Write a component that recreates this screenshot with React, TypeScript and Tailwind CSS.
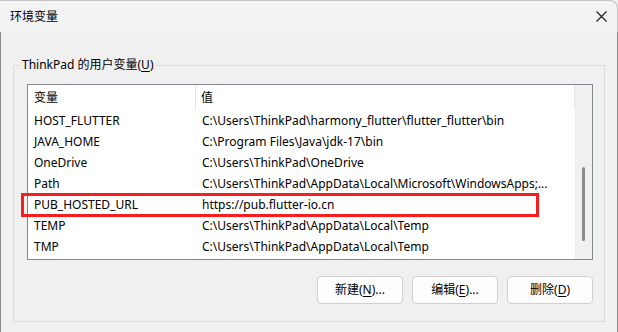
import React from "react";

const rows = [
  { name: "HOST_FLUTTER", value: "C:\\Users\\ThinkPad\\harmony_flutter\\flutter_flutter\\bin" },
  { name: "JAVA_HOME", value: "C:\\Program Files\\Java\\jdk-17\\bin" },
  { name: "OneDrive", value: "C:\\Users\\ThinkPad\\OneDrive" },
  { name: "Path", value: "C:\\Users\\ThinkPad\\AppData\\Local\\Microsoft\\WindowsApps;..." },
  { name: "PUB_HOSTED_URL", value: "https://pub.flutter-io.cn" },
  { name: "TEMP", value: "C:\\Users\\ThinkPad\\AppData\\Local\\Temp" },
  { name: "TMP", value: "C:\\Users\\ThinkPad\\AppData\\Local\\Temp" },
];

const font = "font-['Noto_Sans','Noto_Sans_CJK_SC',sans-serif]";

function DialogButton({ label, hotkey, tail }: { label: string; hotkey: string; tail: string }) {
  return (
    <button className="w-[86px] h-[28px] rounded-[4px] border border-[#d0d0d0] bg-[#fdfdfd] text-[12px] text-black flex items-center justify-center">
      {label}(<span className="underline underline-offset-2">{hotkey}</span>){tail}
    </button>
  );
}

export default function App() {
  return (
    <div className={`relative w-[618px] h-[332px] bg-[#f0f0f0] overflow-hidden flex flex-col text-black ${font}`}>
      {/* Title bar */}
      <div className="h-[32px] shrink-0 flex items-center justify-between pl-[10px] pr-[10px] bg-[#f3f3f3] border-r border-t border-[#c4c4c4] rounded-tr-[8px]">
        <span className="text-[12px]">环境变量</span>
        <svg width="11" height="11" viewBox="0 0 11 11" className="mb-[1px]">
          <path d="M0.5 0.5 L10.5 10.5 M10.5 0.5 L0.5 10.5" stroke="#1a1a1a" strokeWidth="1.1" fill="none" />
        </svg>
      </div>

      {/* Body */}
      <div className="flex-1 border-l border-r border-[#8a8a8a] pl-[12px] pr-[12px] pt-[33px]">
        {/* Group box */}
        <div className="relative w-[592px] h-[257px] border border-[#dcdcdc] flex flex-col">
          <span className="absolute -top-[10px] left-[6px] px-[2px] bg-[#f0f0f0] text-[12px] leading-[18px]">
            ThinkPad 的用户变量(<span className="underline underline-offset-2">U</span>)
          </span>

          {/* List view */}
          <div className="ml-[13px] mt-[18px] w-[566px] h-[176px] border border-[#828790] bg-white flex">
            <div className="w-[547px] flex flex-col">
              <div className="h-[25px] shrink-0 flex text-[12px]">
                <div className="w-[168px] pl-[6px] flex items-center border-r border-[#e5e5e5]">变量</div>
                <div className="flex-1 pl-[5px] flex items-center border-r border-[#e5e5e5]">值</div>
              </div>
              {rows.map((r) => (
                <div key={r.name} className="h-[21px] flex text-[12px] leading-[21px] whitespace-nowrap">
                  <div className="w-[168px] shrink-0 pl-[6px]">{r.name}</div>
                  <div className="pl-[6px]">{r.value}</div>
                </div>
              ))}
            </div>
            {/* Scrollbar */}
            <div className="w-[17px] bg-[#f0f0f0] flex flex-col items-center pt-[82px]">
              <div className="w-[3px] h-[74px] rounded-full bg-[#8a8a8a] -ml-[1px]" />
            </div>
          </div>

          {/* Buttons */}
          <div className="flex justify-end gap-[9px] mt-[16px] mr-[11px]">
            <DialogButton label="新建" hotkey="N" tail="..." />
            <DialogButton label="编辑" hotkey="E" tail="..." />
            <DialogButton label="删除" hotkey="D" tail="" />
          </div>
        </div>
      </div>

      {/* Red highlight annotation */}
      <div className="absolute left-[21px] top-[193px] w-[518px] h-[24px] border-[3px] border-[#f81e1e]" />
    </div>
  );
}
